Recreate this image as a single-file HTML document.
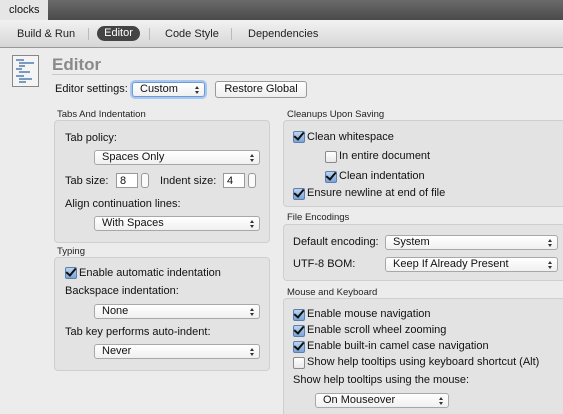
<!DOCTYPE html><html><head><style>
html,body{margin:0;width:563px;height:414px;overflow:hidden}
body{background:#ececec;font-family:"Liberation Sans",sans-serif;font-size:11px;color:#111;position:relative}
.a{position:absolute;white-space:nowrap}
.t{line-height:14px}
.sm{font-size:9.5px;color:#222}
.box{position:absolute;background:#e3e3e3;border:1px solid #cfcfcf;border-radius:4px}
.pop{position:absolute;height:13px;background:linear-gradient(#fff,#f0f0f0);border:1px solid #a8a8a8;border-radius:3px;line-height:13px;padding-left:7px;box-sizing:content-box}
.pop:after{content:"";position:absolute;right:5px;top:3px;width:0;height:0;border-left:2px solid transparent;border-right:2px solid transparent;border-bottom:3px solid #333}
.pop:before{content:"";position:absolute;right:5px;top:8px;width:0;height:0;border-left:2px solid transparent;border-right:2px solid transparent;border-top:3px solid #333}
.cb{position:absolute;width:10px;height:10px;border:1px solid #8a8a8a;border-radius:2px;background:linear-gradient(#fff,#e8e8e8)}
.cb.on{background:linear-gradient(#bcd3ef,#7aa4d8);border-color:#5b7fae}
.cb.on:after{content:"";position:absolute;left:2px;top:-2px;width:4px;height:8px;border-right:2px solid #111;border-bottom:2px solid #111;transform:rotate(40deg)}
.inp{position:absolute;background:#fff;border:1px solid #999;height:15px;line-height:15px;padding-left:3px;box-sizing:border-box}
.st{position:absolute;width:8px;height:15px;border:1px solid #999;border-radius:3px;background:#fafafa;box-sizing:border-box}
</style></head><body>
<div class="a" style="left:0;top:0;width:563px;height:20px;background:linear-gradient(#6a6a6a,#4a4a4a)"></div>
<div class="a t" style="left:0;top:0;width:48px;height:20px;background:#e6e6e6;line-height:20px;padding-left:9px;box-sizing:border-box;font-size:11px">clocks</div>
<div class="a" style="left:0;top:20px;width:563px;height:27px;background:linear-gradient(#f2f2f2,#d6d6d6);border-bottom:1px solid #999"></div>
<div class="a t" style="left:17px;top:27px;color:#222">Build &amp; Run</div>
<div class="a" style="left:88px;top:28px;width:1px;height:12px;background:#bbb"></div>
<div class="a t" style="left:97px;top:26px;width:43px;height:15px;background:#444;border-radius:8px;color:#fff;text-align:center;line-height:15px">Editor</div>
<div class="a" style="left:149px;top:28px;width:1px;height:12px;background:#bbb"></div>
<div class="a t" style="left:165px;top:27px;color:#222">Code Style</div>
<div class="a" style="left:231px;top:28px;width:1px;height:12px;background:#bbb"></div>
<div class="a t" style="left:248px;top:27px;color:#222">Dependencies</div>
<svg class="a" style="left:12px;top:55px" width="29" height="34"><rect x="0.5" y="0.5" width="26" height="31" fill="#f4f4f4" stroke="#888"/><g stroke="#3a6aa8" stroke-width="1.3"><line x1="4" y1="5" x2="12" y2="5"/><line x1="7" y1="8" x2="22" y2="8"/><line x1="7" y1="11" x2="13" y2="11"/><line x1="4" y1="14" x2="10" y2="14"/><line x1="7" y1="17" x2="18" y2="17"/><line x1="4" y1="21" x2="12" y2="21"/><line x1="7" y1="24" x2="20" y2="24"/><line x1="7" y1="27" x2="14" y2="27"/></g></svg>
<div class="a" style="left:52px;top:55px;font-size:17px;font-weight:bold;color:#8a8a8a">Editor</div>
<div class="a" style="left:52px;top:74px;width:511px;height:1px;background:#c8c8c8"></div>
<div class="a t" style="left:55px;top:82px">Editor settings:</div>
<div class="pop" style="left:132px;top:82px;width:64px;border-color:#6a9ad8;box-shadow:0 0 0 2px #a9c7ee">Custom</div>
<div class="a t" style="left:215px;top:81px;width:90px;height:15px;border:1px solid #999;border-radius:3px;background:linear-gradient(#fff,#eee);text-align:center;line-height:15px">Restore Global</div>

<div class="a sm" style="left:57px;top:109px">Tabs And Indentation</div>
<div class="box" style="left:54px;top:120px;width:214px;height:121px"></div>
<div class="a t" style="left:65px;top:131px">Tab policy:</div>
<div class="pop" style="left:94px;top:150px;width:157px">Spaces Only</div>
<div class="a t" style="left:65px;top:174px">Tab size:</div>
<div class="inp" style="left:116px;top:173px;width:22px">8</div>
<div class="st" style="left:141px;top:173px"></div>
<div class="a t" style="left:160px;top:174px">Indent size:</div>
<div class="inp" style="left:223px;top:173px;width:22px">4</div>
<div class="st" style="left:248px;top:173px"></div>
<div class="a t" style="left:65px;top:197px">Align continuation lines:</div>
<div class="pop" style="left:94px;top:216px;width:157px">With Spaces</div>

<div class="a sm" style="left:57px;top:246px">Typing</div>
<div class="box" style="left:54px;top:257px;width:214px;height:112px"></div>
<div class="cb on" style="left:65px;top:267px"></div>
<div class="a t" style="left:79px;top:266px">Enable automatic indentation</div>
<div class="a t" style="left:65px;top:284px">Backspace indentation:</div>
<div class="pop" style="left:94px;top:304px;width:157px">None</div>
<div class="a t" style="left:65px;top:325px">Tab key performs auto-indent:</div>
<div class="pop" style="left:94px;top:344px;width:157px">Never</div>

<div class="a sm" style="left:287px;top:109px">Cleanups Upon Saving</div>
<div class="box" style="left:283px;top:120px;width:285px;height:85px"></div>
<div class="cb on" style="left:293px;top:131px"></div>
<div class="a t" style="left:307px;top:130px">Clean whitespace</div>
<div class="cb" style="left:325px;top:151px"></div>
<div class="a t" style="left:339px;top:149px">In entire document</div>
<div class="cb on" style="left:325px;top:171px"></div>
<div class="a t" style="left:339px;top:169px">Clean indentation</div>
<div class="cb on" style="left:293px;top:188px"></div>
<div class="a t" style="left:307px;top:186px">Ensure newline at end of file</div>

<div class="a sm" style="left:287px;top:212px">File Encodings</div>
<div class="box" style="left:283px;top:224px;width:285px;height:55px"></div>
<div class="a t" style="left:293px;top:235px">Default encoding:</div>
<div class="pop" style="left:385px;top:235px;width:164px">System</div>
<div class="a t" style="left:293px;top:257px">UTF-8 BOM:</div>
<div class="pop" style="left:385px;top:257px;width:164px">Keep If Already Present</div>

<div class="a sm" style="left:287px;top:287px">Mouse and Keyboard</div>
<div class="box" style="left:283px;top:298px;width:285px;height:116px;border-bottom:none;border-radius:4px 4px 0 0"></div>
<div class="cb on" style="left:293px;top:309px"></div>
<div class="a t" style="left:307px;top:307px">Enable mouse navigation</div>
<div class="cb on" style="left:293px;top:325px"></div>
<div class="a t" style="left:307px;top:323px">Enable scroll wheel zooming</div>
<div class="cb on" style="left:293px;top:341px"></div>
<div class="a t" style="left:307px;top:339px">Enable built-in camel case navigation</div>
<div class="cb" style="left:293px;top:357px"></div>
<div class="a t" style="left:307px;top:355px">Show help tooltips using keyboard shortcut (Alt)</div>
<div class="a t" style="left:293px;top:373px">Show help tooltips using the mouse:</div>
<div class="pop" style="left:315px;top:393px;width:125px">On Mouseover</div>
</body></html>
